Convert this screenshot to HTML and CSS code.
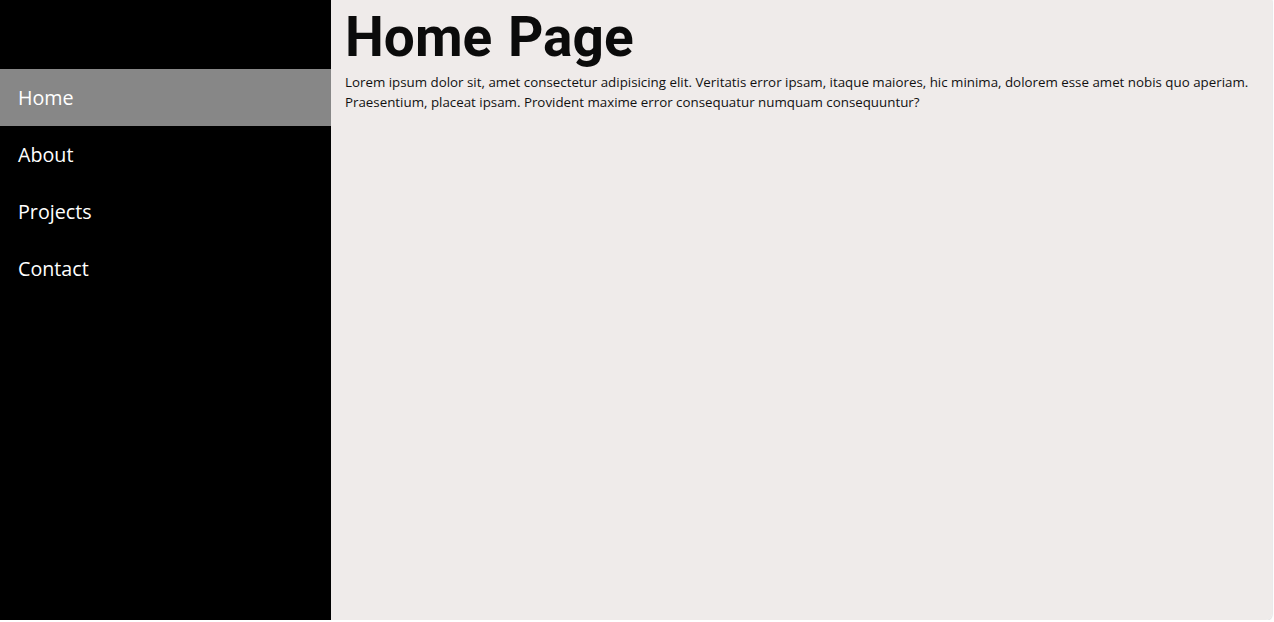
FILE: index.html
```html
<!DOCTYPE html>
<html lang="en">
<head>
<meta charset="utf-8">
<title>Home Page</title>
<link rel="stylesheet" href="styles.css">
</head>
<body>
<div class="frame">
  <aside class="sidebar">
    <nav class="nav">
      <a class="nav-item active" href="#">Home</a>
      <a class="nav-item" href="#">About</a>
      <a class="nav-item" href="#">Projects</a>
      <a class="nav-item" href="#">Contact</a>
    </nav>
  </aside>
  <main class="content">
    <h1 class="title">Home Page</h1>
    <p class="text">Lorem ipsum dolor sit, amet consectetur adipisicing elit. Veritatis error ipsam, itaque maiores, hic minima, dolorem esse amet nobis quo aperiam. Praesentium, placeat ipsam. Provident maxime error consequatur numquam consequuntur?</p>
  </main>
</div>
</body>
</html>
```
FILE: styles.css
```css
html, body {
  margin: 0;
  padding: 0;
  background: #ffffff;
}
.frame {
  display: flex;
  width: 1272px;
  height: 620px;
  border-radius: 0 0 6px 0;
  box-shadow: 0 1px 2px rgba(0,0,0,0.12), 1px 0 1px rgba(0,0,0,0.06);
  overflow: hidden;
}
.sidebar {
  width: 331px;
  flex: none;
  background: #000;
  padding-top: 69px;
  box-sizing: border-box;
}
.nav {
  display: flex;
  flex-direction: column;
}
.nav-item {
  display: flex;
  align-items: center;
  height: 57px;
  box-sizing: border-box;
  padding: 0 0 1px 18px;
  color: #fff;
  text-decoration: none;
  font-family: "Open Sans", sans-serif;
  font-size: 19.7px;
}
.nav-item.active {
  background: #878787;
}
.content {
  flex: 1;
  background: #efebea;
  padding: 0 14px;
}
.title {
  margin: 4px 0 0;
  font-family: Roboto, sans-serif;
  font-weight: 700;
  font-size: 55px;
  line-height: 66px;
  color: #0b0b0b;
  letter-spacing: 0;
  word-spacing: 2px;
}
.text {
  margin: 2px 0 0;
  font-family: "Open Sans", sans-serif;
  font-size: 13.34px;
  line-height: 20px;
  color: #111;
}
```
